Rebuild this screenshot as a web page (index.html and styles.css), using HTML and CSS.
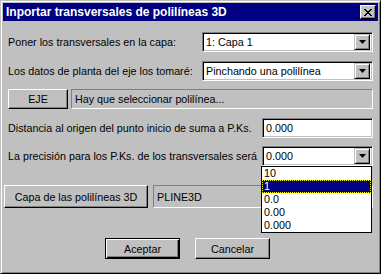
FILE: index.html
```html
<!DOCTYPE html>
<html>
<head>
<meta charset="utf-8">
<link rel="stylesheet" href="styles.css">
</head>
<body>
<div class="window">
  <div class="titlebar">
    <span class="title">Inportar transversales de polilíneas 3D</span>
    <span class="close"><svg width="8" height="7" viewBox="0 0 8 7"><path d="M0 0h2v1h1v1h2v-1h1v-1h2v1h-1v1h-1v1h-1v1h1v1h1v1h1v1h-2v-1h-1v-1h-2v1h-1v1h-2v-1h1v-1h1v-1h1v-1h-1v-1h-1v-1h-1z" fill="#000"/></svg></span>
  </div>
  <div class="content">
    <div class="row r1">
      <span class="label">Poner los transversales en la capa:</span>
      <div class="combo wide"><span class="value">1: Capa 1</span><span class="arrow"><svg width="7" height="4" viewBox="0 0 7 4"><path d="M0 0h7l-3.5 4z" fill="#000"/></svg></span></div>
    </div>
    <div class="row r2">
      <span class="label">Los datos de planta del eje los tomaré:</span>
      <div class="combo wide"><span class="value">Pinchando una polilínea</span><span class="arrow"><svg width="7" height="4" viewBox="0 0 7 4"><path d="M0 0h7l-3.5 4z" fill="#000"/></svg></span></div>
    </div>
    <div class="row r3">
      <button class="btn eje">EJE</button>
      <div class="static grow">Hay que seleccionar polilínea...</div>
    </div>
    <div class="row r4">
      <span class="label">Distancia al origen del punto inicio de suma a P.Ks.</span>
      <div class="edit narrow">0.000</div>
    </div>
    <div class="row r5">
      <span class="label">La precisión para los P.Ks. de los transversales será</span>
      <div class="combo narrow"><span class="value">0.000</span><span class="arrow"><svg width="7" height="4" viewBox="0 0 7 4"><path d="M0 0h7l-3.5 4z" fill="#000"/></svg></span></div>
    </div>
    <div class="row r6">
      <button class="btn capa">Capa de las polilíneas 3D</button>
      <div class="static grow">PLINE3D</div>
    </div>
    <div class="row r7">
      <button class="btn ok">Aceptar</button>
      <button class="btn cancel">Cancelar</button>
    </div>
  </div>
  <ul class="droplist">
    <li>10</li>
    <li class="sel">1</li>
    <li>0.0</li>
    <li>0.00</li>
    <li>0.000</li>
  </ul>
</div>
</body>
</html>
```

FILE: styles.css
```css
html, body {
  margin: 0;
  padding: 0;
  background: #c0c0c0;
}
.window {
  position: relative;
  width: 381px;
  height: 274px;
  box-sizing: border-box;
  background: #c0c0c0;
  border: 1px solid;
  border-color: #c0c0c0 #000 #000 #c0c0c0;
  box-shadow: inset 1px 1px #fff, inset -1px -1px #808080;
  padding: 2px;
  display: flex;
  flex-direction: column;
  font-family: "Liberation Sans", Arial, sans-serif;
  font-size: 10.75px;
  color: #000;
}
.titlebar {
  height: 18px;
  background: #000080;
  display: flex;
  align-items: center;
  padding: 0 2px 0 3px;
  flex-shrink: 0;
}
.title {
  color: #fff;
  font-weight: bold;
  font-size: 12px;
  flex: 1;
}
.close {
  width: 16px;
  height: 14px;
  box-sizing: border-box;
  background: #c0c0c0;
  border: 1px solid;
  border-color: #fff #000 #000 #fff;
  box-shadow: inset -1px -1px #808080;
  display: flex;
  align-items: center;
  justify-content: center;
  padding-right: 1px;
}
.close svg { display: block; }
.content {
  display: flex;
  flex-direction: column;
  flex: 1;
}
.row {
  display: flex;
  align-items: center;
  padding: 0 5px 0 5px;
  height: 20px;
  flex-shrink: 0;
}
.r1 { margin-top: 11px; }
.r2 { margin-top: 9px; }
.r3 { margin-top: 8px; }
.r4 { margin-top: 9px; }
.r5 { margin-top: 8px; }
.r6 { margin-top: 19px; height: 23px; padding-left: 1px; }
.r7 { margin-top: 30px; height: 21px; padding-left: 102px; gap: 15px; }
.label { white-space: nowrap; }
.combo, .edit {
  margin-left: auto;
  height: 20px;
  box-sizing: border-box;
  background: #fff;
  border: 1px solid;
  border-color: #808080 #fff #fff #808080;
  box-shadow: inset 1px 1px #000, inset -1px -1px #c0c0c0;
  display: flex;
  align-items: center;
  padding: 0 2px 0 3px;
}
.wide { width: 171px; }
.narrow { width: 111px; }
.value { flex: 1; white-space: nowrap; }
.arrow {
  width: 16px;
  height: 16px;
  box-sizing: border-box;
  background: #c0c0c0;
  border: 1px solid;
  border-color: #c0c0c0 #000 #000 #c0c0c0;
  box-shadow: inset 1px 1px #fff, inset -1px -1px #808080;
  display: flex;
  align-items: center;
  justify-content: center;
}
.arrow svg { display: block; }
.btn {
  font: inherit;
  color: #000;
  background: #c0c0c0;
  height: 100%;
  box-sizing: border-box;
  border: 1px solid;
  border-color: #fff #000 #000 #fff;
  box-shadow: inset -1px -1px #808080;
  padding: 0;
  margin: 0;
}
.eje { width: 60px; margin-right: 3px; }
.capa { width: 144px; margin-right: 5px; }
.ok, .cancel { width: 75px; }
.ok {
  border: 1px solid #000;
  box-shadow: inset 1px 1px #fff, inset -1px -1px #000, inset -2px -2px #808080;
}
.static {
  height: 100%;
  box-sizing: border-box;
  border: 1px solid;
  border-color: #808080 #fff #fff #808080;
  display: flex;
  align-items: center;
  padding-left: 3px;
  white-space: nowrap;
}
.grow { flex: 1; }
.droplist {
  position: absolute;
  left: 260px;
  top: 165px;
  width: 111px;
  height: 67px;
  box-sizing: border-box;
  margin: 0;
  padding: 0;
  list-style: none;
  background: #fff;
  border: 1px solid #000;
}
.droplist li {
  height: 13px;
  line-height: 13px;
  padding-left: 2px;
  box-sizing: border-box;
}
.droplist .sel {
  background: #000080;
  color: #fff;
  outline: 1px dotted #ffff00;
  outline-offset: -1px;
}
```
